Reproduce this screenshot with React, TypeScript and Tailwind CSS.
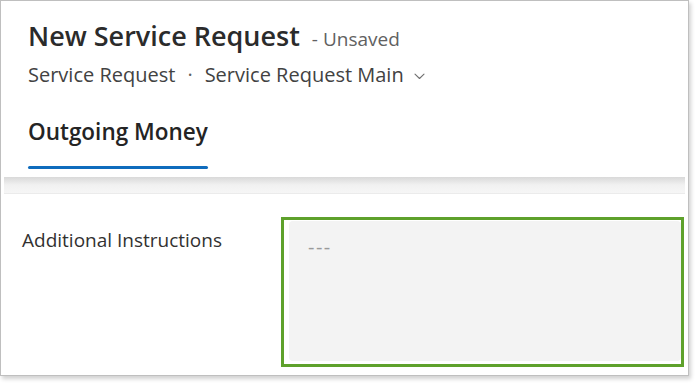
export default function App() {
  return (
    <div className="h-[385px] w-[698px] bg-white font-['Open_Sans',sans-serif]">
      <div className="flex h-[376px] w-[689px] flex-col border border-[#bfbfbf] bg-white shadow-[2px_3px_4px_rgba(0,0,0,0.18)]">
        {/* header */}
        <div className="pl-[27px] pt-[17px]">
          <div className="flex items-baseline gap-[12px]">
            <h1 className="text-[27px] leading-[36px] font-semibold text-[#2b2b2b]">
              New Service Request
            </h1>
            <span className="text-[19px] text-[#616161]">- Unsaved</span>
          </div>
          <div className="mt-[7px] flex items-center text-[20px] leading-[28px] text-[#424242]">
            <span>Service Request</span>
            <span className="px-[12px] text-[#616161]">·</span>
            <span>Service Request Main</span>
            <svg
              className="ml-[10px] mt-[2px]"
              width="11"
              height="7"
              viewBox="0 0 11 7"
              fill="none"
            >
              <path
                d="M1 1.2l4.5 4.3 4.5-4.3"
                stroke="#707070"
                strokeWidth="1.1"
                strokeLinecap="round"
                strokeLinejoin="round"
              />
            </svg>
          </div>
          <div className="mt-[28px] inline-flex flex-col">
            <span className="text-[22.5px] leading-[30px] font-semibold text-[#242424]">
              Outgoing Money
            </span>
            <div className="mt-[19px] h-[3px] rounded-full bg-[#0f6cbd]" />
          </div>
          <div className="h-[8px]" />
        </div>

        {/* header shadow band */}
        <div className="mx-[3px] h-[17px] border-b border-[#ebebeb] bg-gradient-to-b from-[#d9d9d9] via-[#f1f1f1] to-[#f6f6f6]" />

        {/* body */}
        <div className="flex flex-1 pt-[23px] pl-[21px] pr-[4px]">
          <div className="w-[259px] pt-[10px] text-[19px] leading-[26px] text-[#323130]">
            Additional Instructions
          </div>
          <div className="flex h-[150px] flex-1 border-[3px] border-[#5ea12b] pt-[1px] pb-[3px] pl-[5px]">
            <div className="flex-1 rounded-[4px] bg-[#f3f3f3] pl-[19px] pt-[15px]">
              <span className="text-[20px] leading-[20px] tracking-[1.5px] text-[#9a9a9a]">
                ---
              </span>
            </div>
          </div>
        </div>
      </div>
    </div>
  );
}
